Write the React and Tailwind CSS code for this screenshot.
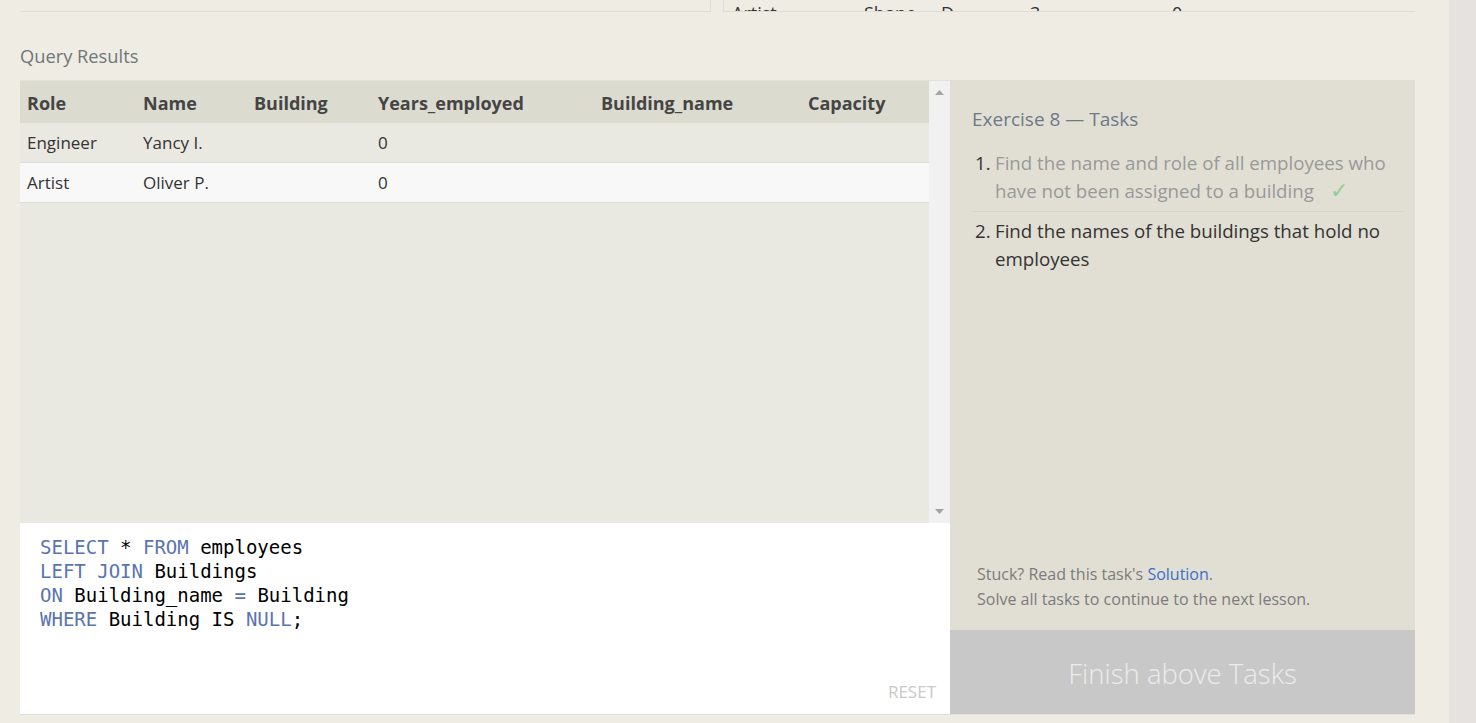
import React from "react";

const cols = [
  { key: "Role", w: "w-[116px]" },
  { key: "Name", w: "w-[111px]" },
  { key: "Building", w: "w-[124px]" },
  { key: "Years_employed", w: "w-[223px]" },
  { key: "Building_name", w: "w-[207px]" },
  { key: "Capacity", w: "w-[120px]" },
];

const rows = [
  ["Engineer", "Yancy I.", "", "0", "", ""],
  ["Artist", "Oliver P.", "", "0", "", ""],
];

const sans = { fontFamily: "'Open Sans', 'Noto Sans', sans-serif" };

export default function App() {
  return (
    <div className="flex h-[723px] w-full overflow-hidden bg-[#efece4]" style={sans}>
      <div className="flex w-[1449px] flex-col px-[20px]">
        {/* previous lesson table, scrolled mostly out of view */}
        <div className="flex h-[12px] w-[1395px] gap-[12px]">
          <div className="h-[12px] w-[691px] border-r border-b border-[#dfdcd5]" />
          <div className="flex h-[12px] flex-1 overflow-hidden border-l border-b border-[#dfdcd5] text-[18px] leading-[40px] text-[#333]">
            <div className="mt-[-7px] flex pl-[8px]">
              <span className="w-[132px]">Artist</span>
              <span className="w-[77px]">Shane</span>
              <span className="w-[89px]">D.</span>
              <span className="w-[142px]">3</span>
              <span>0</span>
            </div>
          </div>
        </div>

        <div className="mt-[31px] text-[18.3px] leading-[26px] text-[#72757b]">Query Results</div>

        <div className="mt-[11px] flex h-[635px] w-[1395px] border-b border-[#e2dfd8]">
          <div className="flex w-[930px] flex-col">
            <div className="flex h-[443px] border-t border-[#e3e1da]">
              <div className="flex-1 bg-[#e9e8e1]">
                <div className="flex h-[42px] items-center bg-[#dcdbd0] pt-[2px] text-[18px] font-bold text-[#454545]">
                  {cols.map((c) => (
                    <div key={c.key} className={`${c.w} pl-[7px]`}>
                      {c.key}
                    </div>
                  ))}
                </div>
                {rows.map((r, i) => (
                  <div
                    key={i}
                    className={`flex h-[40px] items-center border-b border-[#dcdcd8] text-[17px] text-[#333] ${
                      i === 1 ? "bg-[#f8f8f8]" : "bg-[#e9e8e1]"
                    }`}
                  >
                    {r.map((v, j) => (
                      <div key={j} className={`${cols[j].w} pl-[7px]`}>
                        {v}
                      </div>
                    ))}
                  </div>
                ))}
              </div>
              <div className="flex w-[21px] flex-col items-center justify-between bg-[#f1f1f1] py-[9px]">
                <svg width="9" height="5" viewBox="0 0 9 5">
                  <path d="M0 5 L4.5 0 L9 5 Z" fill="#a3a3a3" />
                </svg>
                <svg width="9" height="5" viewBox="0 0 9 5">
                  <path d="M0 0 L4.5 5 L9 0 Z" fill="#a3a3a3" />
                </svg>
              </div>
            </div>
            <div className="relative flex-1 bg-white px-[20px] pt-[12px]">
              <pre
                className="text-[19px] leading-[24px] text-black"
                style={{ fontFamily: "'DejaVu Sans Mono', 'Liberation Mono', monospace" }}
              >
                <span className="text-[#5a74b0]">SELECT</span> * <span className="text-[#5a74b0]">FROM</span> employees{"\n"}
                <span className="text-[#5a74b0]">LEFT</span> <span className="text-[#5a74b0]">JOIN</span> Buildings{"\n"}
                <span className="text-[#5a74b0]">ON</span> Building_name <span className="text-[#5a74b0]">=</span> Building{"\n"}
                <span className="text-[#5a74b0]">WHERE</span> Building IS <span className="text-[#5a74b0]">NULL</span>;
              </pre>
              <div className="absolute right-[14px] bottom-[10px] text-[17px] text-[#c9c9c9]">RESET</div>
            </div>
          </div>

          <div className="flex w-[465px] flex-col">
            <div className="flex flex-1 flex-col justify-between bg-[#e1dfd4] pt-[25px] pr-[12px] pb-[18px] pl-[22px]">
              <div>
                <div className="text-[19px] leading-[28px] text-[#6f7888]">Exercise 8 — Tasks</div>
                <ol className="mt-[16px] text-[18.7px] leading-[28px]">
                  <li className="flex border-b border-[#d6d4ca] pb-[6px]">
                    <span className="w-[23px] shrink-0 pl-[3px] text-[#333]">1.</span>
                    <span className="text-[#999]">
                      Find the name and role of all employees who have not been assigned to a building
                      <span className="ml-[16px] text-[22px] font-light text-[#8fd08f]" style={{ fontFamily: "'DejaVu Sans', sans-serif" }}>
                        ✓
                      </span>
                    </span>
                  </li>
                  <li className="flex pt-[5px]">
                    <span className="w-[23px] shrink-0 pl-[3px] text-[#333]">2.</span>
                    <span className="text-[#333]">Find the names of the buildings that hold no employees</span>
                  </li>
                </ol>
              </div>
              <div className="pl-[5px] text-[16px] leading-[25px] text-[#7b7b7b]">
                <div>
                  Stuck? Read this task's <span className="text-[#3a70c9]">Solution</span>.
                </div>
                <div>Solve all tasks to continue to the next lesson.</div>
              </div>
            </div>
            <div className="flex h-[84px] items-center justify-center bg-[#c8c8c8] pt-[4px] text-[27.5px] font-light text-[#ececec]">
              Finish above Tasks
            </div>
          </div>
        </div>
      </div>
      <div className="h-full w-[27px] bg-[#e5e2df]" />
    </div>
  );
}
